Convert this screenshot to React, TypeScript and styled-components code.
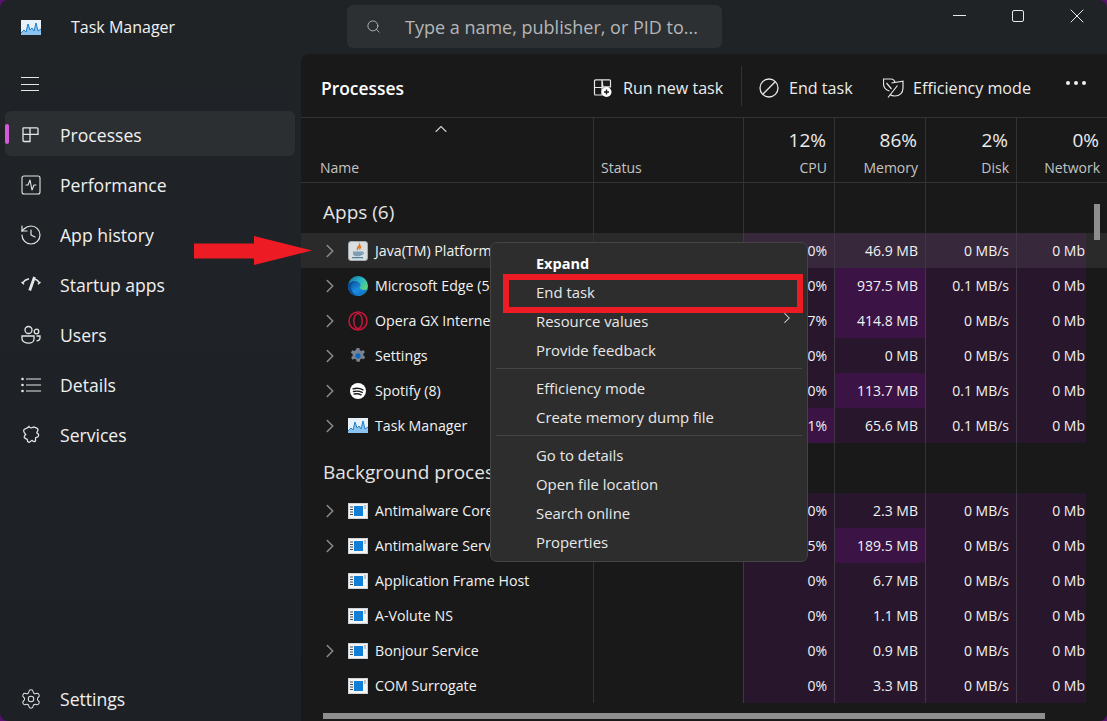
import styled, { createGlobalStyle } from "styled-components";
import { ChevronRight, ChevronUp, History, Search, Settings as SettingsIcon, SquareActivity, X } from "lucide-react";

const GlobalStyle = createGlobalStyle`
  html, body {
    margin: 0;
    height: 100%;
    background: #5a1070;
    overflow: hidden;
  }
  * {
    box-sizing: border-box;
  }
`;

const FONT = `"Open Sans", "Noto Sans", "Liberation Sans", sans-serif`;

type Proc = {
  name: string;
  icon: "java" | "edge" | "opera" | "gear" | "spotify" | "tm" | "app";
  expand?: boolean;
  cpu: string;
  mem: string;
  disk: string;
  net: string;
  memHot?: boolean;
  cpuHot?: boolean;
  hover?: boolean;
};

const apps: Proc[] = [
  { name: "Java(TM) Platform", icon: "java", expand: true, cpu: "0%", mem: "46.9 MB", disk: "0 MB/s", net: "0 Mb", hover: true },
  { name: "Microsoft Edge (5)", icon: "edge", expand: true, cpu: "0%", mem: "937.5 MB", disk: "0.1 MB/s", net: "0 Mb", memHot: true },
  { name: "Opera GX Internet", icon: "opera", expand: true, cpu: "0.7%", mem: "414.8 MB", disk: "0 MB/s", net: "0 Mb", memHot: true },
  { name: "Settings", icon: "gear", expand: true, cpu: "0%", mem: "0 MB", disk: "0 MB/s", net: "0 Mb" },
  { name: "Spotify (8)", icon: "spotify", expand: true, cpu: "0%", mem: "113.7 MB", disk: "0.1 MB/s", net: "0 Mb", memHot: true },
  { name: "Task Manager", icon: "tm", expand: true, cpu: "3.1%", mem: "65.6 MB", disk: "0.1 MB/s", net: "0 Mb", cpuHot: true },
];

const background: Proc[] = [
  { name: "Antimalware Core", icon: "app", expand: true, cpu: "0%", mem: "2.3 MB", disk: "0 MB/s", net: "0 Mb" },
  { name: "Antimalware Service", icon: "app", expand: true, cpu: "0.5%", mem: "189.5 MB", disk: "0 MB/s", net: "0 Mb", memHot: true },
  { name: "Application Frame Host", icon: "app", cpu: "0%", mem: "6.7 MB", disk: "0 MB/s", net: "0 Mb" },
  { name: "A-Volute NS", icon: "app", cpu: "0%", mem: "1.1 MB", disk: "0 MB/s", net: "0 Mb" },
  { name: "Bonjour Service", icon: "app", expand: true, cpu: "0%", mem: "0.9 MB", disk: "0 MB/s", net: "0 Mb" },
  { name: "COM Surrogate", icon: "app", cpu: "0%", mem: "3.3 MB", disk: "0 MB/s", net: "0 Mb" },
];

const TaskManagerGlyph = () => (
  <svg width="20" height="15" viewBox="0 0 20 15">
    <rect x="0" y="0" width="20" height="15" fill="#e6f1fa" />
    <path d="M0 13 L3 10 L5 12 L7 4 L9 10 L11 8 L13 11 L15 3 L17 11 L20 9 L20 15 L0 15 Z" fill="#8cc4f0" />
    <path d="M0 13 L3 10 L5 12 L7 4 L9 10 L11 8 L13 11 L15 3 L17 11 L20 9" fill="none" stroke="#1f7fd0" strokeWidth="1" />
  </svg>
);

const AppIcon = ({ kind }: { kind: Proc["icon"] }) => {
  if (kind === "java") {
    return (
      <svg width="20" height="20" viewBox="0 0 20 20">
        <rect x="0.5" y="0.5" width="19" height="19" rx="2.500" fill="#d9dee1" stroke="#a4aaae" />
        <path d="M11 1.500c2.400 3-3.800 4-1.400 8-.8-2.600 5-3.600 1.400-8z" fill="#e2630a" strokeWidth="0.4" stroke="#e2630a" />
        <path d="M13.500 4.500c-2.300 1.300-3 2.800-1.600 4.800.3-1.500 1.300-2.500 1.600-4.800z" fill="#e76f00" />
        <path d="M5 10.500h9v2.200c0 1.500-1.500 2.500-3 2.500H8c-1.500 0-3-1-3-2.500z" fill="#7f9db5" />
        <path d="M14 11c2 0 2 2.500-.5 2.500" fill="none" stroke="#5382a1" />
        <rect x="4" y="16" width="11" height="1.300" fill="#5382a1" />
      </svg>
    );
  }
  if (kind === "edge") {
    return (
      <svg width="20" height="20" viewBox="0 0 20 20">
        <defs>
          <linearGradient id="edgeBlue" x1="0.1" y1="0.2" x2="0.8" y2="1">
            <stop offset="0" stopColor="#0d5ba8" />
            <stop offset="0.5" stopColor="#1b8ee0" />
            <stop offset="1" stopColor="#0f6cbd" />
          </linearGradient>
          <linearGradient id="edgeGreen" x1="0" y1="0" x2="1" y2="0.8">
            <stop offset="0" stopColor="#0e6a9e" />
            <stop offset="0.5" stopColor="#2bb5c8" />
            <stop offset="1" stopColor="#72e25e" />
          </linearGradient>
        </defs>
        <circle cx="10" cy="10" r="10" fill="url(#edgeGreen)" />
        <path d="M10 20C4.500 20 0 15.500 0 10c0-3 3.500-4.800 7-4.800 3.200 0 5.500 1.800 5.500 4 0 1-.7 1.600-.7 2.400 0 1.500 2 2.500 4 2.500 1.500 0 2.700-.4 3.700-1C18.300 17.300 14.500 20 10 20z" fill="url(#edgeBlue)" />
        <path d="M0 10c0-3 3.500-4.800 7-4.800-3 1.500-4.500 4-4 7 .5 3.500 3.300 6.300 7 7.800C4.500 20 0 15.500 0 10z" fill="#0a4f96" />
      </svg>
    );
  }
  if (kind === "opera") {
    return (
      <svg width="20" height="20" viewBox="0 0 20 20" fill="none" stroke="#c8163c" strokeWidth="1.500">
        <circle cx="10" cy="10" r="9" />
        <ellipse cx="10" cy="10" rx="4.200" ry="7.500" />
      </svg>
    );
  }
  if (kind === "gear") {
    return (
      <svg width="20" height="20" viewBox="0 0 20 20">
        <g transform="translate(10 9.800) scale(1.150) translate(-10 -9.800)">
          <path d="M8.800 3h2.400l.4 1.900 1.400.7 1.800-.9 1.200 2-1.400 1.300.1 1.600 1.500 1.200-1.100 2.100-1.900-.7-1.300.9-.4 1.900H8.800l-.4-1.900-1.400-.8-1.800.9-1.200-2 1.400-1.300-.1-1.600-1.500-1.200 1.100-2.100 1.900.7 1.300-.9z" fill="#77838e" />
          <circle cx="10" cy="9.800" r="2.300" fill="#1565c0" />
        </g>
      </svg>
    );
  }
  if (kind === "spotify") {
    return (
      <svg width="20" height="20" viewBox="0 0 20 20" fill="none">
        <circle cx="10" cy="10" r="8" fill="#fff" />
        <path d="M5 7.800c3.200-.9 7-.6 10 1M5.500 10.500c2.800-.7 6-.4 8.700.9M6.200 13c2.300-.5 4.800-.3 6.900.8" stroke="#191919" strokeWidth="1.400" strokeLinecap="round" />
      </svg>
    );
  }
  if (kind === "tm") {
    return <TaskManagerGlyph />;
  }
  return (
    <svg width="20" height="16" viewBox="0 0 20 16">
      <rect x="0" y="0" width="20" height="16" fill="#d0d3d6" />
      <rect x="1" y="1" width="18" height="14" fill="#f4f5f6" />
      <rect x="6" y="3" width="9" height="10" fill="#0f7fd8" />
      <path d="M2 4h3M2 6.500h3M2 9h3M2 11.500h3" stroke="#40474d" strokeWidth="1" />
      <path d="M16 3h2M16 5h2" stroke="#8a9096" strokeWidth="1" />
    </svg>
  );
};

const ProcessesIcon = () => (
  <svg width="20" height="20" viewBox="0 0 20 20" fill="none" stroke="currentColor" strokeWidth="1.300">
    <path d="M2.500 2.800h6.500v6.500H2V3.300a.5.5 0 0 1 .5-.5zM9 2.800h7a1 1 0 0 1 1 1v5.500H9zM2 9.300h7v7.200H3a1 1 0 0 1-1-1z" />
  </svg>
);

const StartupIcon = () => (
  <svg width="20" height="20" viewBox="0 0 20 20" fill="none" stroke="currentColor" strokeWidth="1.400">
    <path d="M1.500 8C3 5.800 4.800 4.500 8 3.800M12.500 3.800c3 .6 4.800 1.900 6 4.200" />
    <path d="M13.500 2 8.700 15.500" strokeWidth="2.800" />
    <path d="M.5 7l2.500 2.200M19.500 7 17 9.200" />
  </svg>
);

const UsersIcon = () => (
  <svg width="20" height="20" viewBox="0 0 20 20" fill="none" stroke="currentColor" strokeWidth="1.300">
    <circle cx="7.500" cy="5" r="3.500" />
    <circle cx="15.500" cy="6.500" r="2.300" />
    <path d="M1 11h12v3c0 2.500-2.500 4.200-5.500 4.200S1 16.500 1 14z" />
    <path d="M15.500 11H19v1.800c0 1.800-1.400 3-3.500 3" />
  </svg>
);

const DetailsIcon = () => (
  <svg width="20" height="20" viewBox="0 0 20 20" fill="none" stroke="currentColor" strokeWidth="1.200">
    <path d="M5 4h15M5 10h15M5 16h15" />
    <circle cx="1.500" cy="4" r="1.300" fill="currentColor" stroke="none" />
    <circle cx="1.500" cy="10" r="1.300" fill="currentColor" stroke="none" />
    <circle cx="1.500" cy="16" r="1.300" fill="currentColor" stroke="none" />
  </svg>
);

const ServicesIcon = () => (
  <svg width="20" height="20" viewBox="0 0 20 20" fill="none" stroke="currentColor" strokeWidth="1.300">
    <path d="M8 1.500c1 1.500 3 1.500 4.500.5l1 .2c1.500.4 3.500.8 3.500 2.500 0 1.500-1.200 2-1.200 3 0 .6.700 1 1.700 1.500.3 1-.1 2.500-1 3-1.500-.2-2.200.5-2 1.500.2 1 .3 2.200-.5 2.700-1 .6-2-.3-3-1-1.200.3-1.700 1.900-3 2-1.300-.4-1.800-2-1.800-3-1.200-.5-2.500-.8-3-2.200 0-1.300 1-1.900 1.500-2.800C3.200 7.900 2.200 7 2.700 5 3.700 3.500 6.500 3.500 8 1.500z" />
  </svg>
);

const RunTaskIcon = () => (
  <svg width="20" height="20" viewBox="0 0 20 20" fill="none" stroke="currentColor" strokeWidth="1.200">
    <path d="M10 9.500H1.500V2.800a1 1 0 0 1 1-1h6.500zM9 1.800h7.500a1 1 0 0 1 1 1v6H9zM1.500 9.500h7.500V17H2.500a1 1 0 0 1-1-1z" />
    <circle cx="13.500" cy="14" r="5" fill="#fff" stroke="none" />
    <path d="M13.500 11.500v5M11 14h5" stroke="#191919" strokeWidth="1.400" />
  </svg>
);

const EndTaskIcon = () => (
  <svg width="20" height="20" viewBox="0 0 20 20" fill="none" stroke="currentColor" strokeWidth="1.300">
    <circle cx="10" cy="10" r="9" />
    <path d="M3.800 16.200 16.200 3.800" />
  </svg>
);

const LeafIcon = () => (
  <svg width="21" height="20" viewBox="0 0 21 20" fill="none" stroke="currentColor" strokeWidth="1.200">
    <path d="M6.500 13C3 12 .5 9.500.5 6V1H8c2 0 3.500 1.500 4 3.500" />
    <path d="M8.500 5 20 3.200V10c0 5-3.500 8-8 8-2 0-4-.5-5-1.500" />
    <path d="M5 19.500 14.500 7.500M3.500 5l5 6" />
  </svg>
);

const Processes = ({ rows }: { rows: Proc[] }) => (
  <>
    {rows.map((row) => (
      <Row key={row.name} $hover={row.hover}>
        <NameCell>
          <Caret>{row.expand && <ChevronRight size={22} strokeWidth={1.700} />}</Caret>
          <IconBox>
            <AppIcon kind={row.icon} />
          </IconBox>
          <NameText>{row.name}</NameText>
        </NameCell>
        <StatusCell />
        <HeatCell $hot={row.cpuHot} $hover={row.hover}>{row.cpu}</HeatCell>
        <HeatCell $hot={row.memHot} $hover={row.hover}>{row.mem}</HeatCell>
        <HeatCell $hover={row.hover}>{row.disk}</HeatCell>
        <HeatCell $hover={row.hover}>{row.net}</HeatCell>
      </Row>
    ))}
  </>
);

const Group = ({ title }: { title: string }) => (
  <GroupRow>
    <GroupTitle>{title}</GroupTitle>
    <StatusCell />
    <StatusCell />
    <StatusCell />
    <StatusCell />
    <StatusCell />
  </GroupRow>
);

const App = () => {
  return (
    <Window>
      <GlobalStyle />
      <TitleBar>
        <TitleLeft>
          <TaskManagerGlyph />
          <AppTitle>Task Manager</AppTitle>
        </TitleLeft>
        <SearchBox>
          <Search size={15} strokeWidth={1.300} />
          <SearchText>Type a name, publisher, or PID to...</SearchText>
        </SearchBox>
        <WindowControls>
          <MinimizeMark />
          <MaximizeMark />
          <X size={24} strokeWidth={1} />
        </WindowControls>
      </TitleBar>

      <Content>
        <Sidebar>
          <Hamburger>
            <span />
            <span />
            <span />
          </Hamburger>
          <NavList>
            <NavItem $active>
              <ActiveBar />
              <NavIcon><ProcessesIcon /></NavIcon>
              Processes
            </NavItem>
            <NavItem>
              <NavIcon><SquareActivity size={24} strokeWidth={1.100} /></NavIcon>
              Performance
            </NavItem>
            <NavItem>
              <NavIcon><History size={24} strokeWidth={1.200} /></NavIcon>
              App history
            </NavItem>
            <NavItem>
              <NavIcon><StartupIcon /></NavIcon>
              Startup apps
            </NavItem>
            <NavItem>
              <NavIcon><UsersIcon /></NavIcon>
              Users
            </NavItem>
            <NavItem>
              <NavIcon><DetailsIcon /></NavIcon>
              Details
            </NavItem>
            <NavItem>
              <NavIcon><ServicesIcon /></NavIcon>
              Services
            </NavItem>
          </NavList>
          <NavItem>
            <NavIcon><SettingsIcon size={22} strokeWidth={1.100} /></NavIcon>
            Settings
          </NavItem>
        </Sidebar>

        <Panel>
          <Toolbar>
            <PanelTitle>Processes</PanelTitle>
            <ToolButton $width={148} $gap={10}>
              <RunTaskIcon />
              Run new task
            </ToolButton>
            <ToolDivider />
            <ToolButton $width={124} $gap={10}>
              <EndTaskIcon />
              End task
            </ToolButton>
            <ToolButton $width={183} $gap={9}>
              <LeafIcon />
              Efficiency mode
            </ToolButton>
            <MoreDots>
              <i />
              <i />
              <i />
            </MoreDots>
          </Toolbar>

          <HeaderRow>
            <NameHead>
              <SortMark>
                <ChevronUp size={20} strokeWidth={1.400} />
              </SortMark>
              <HeadLabel>Name</HeadLabel>
            </NameHead>
            <StatusHead>
              <HeadLabel>Status</HeadLabel>
            </StatusHead>
            <MetricHead>
              <Percent>12%</Percent>
              <HeadLabel>CPU</HeadLabel>
            </MetricHead>
            <MetricHead>
              <Percent>86%</Percent>
              <HeadLabel>Memory</HeadLabel>
            </MetricHead>
            <MetricHead>
              <Percent>2%</Percent>
              <HeadLabel>Disk</HeadLabel>
            </MetricHead>
            <MetricHead>
              <Percent>0%</Percent>
              <HeadLabel>Network</HeadLabel>
            </MetricHead>
          </HeaderRow>

          <TableBody>
            <Group title="Apps (6)" />
            <Processes rows={apps} />
            <Group title="Background processes" />
            <Processes rows={background} />
          </TableBody>

          <VerticalThumb />
          <HorizontalThumb />
        </Panel>
      </Content>

      <ContextMenu>
        <MenuItem $bold>Expand</MenuItem>
        <MenuItem>End task</MenuItem>
        <MenuItem>
          Resource values
          <MenuArrow>
            <ChevronRight size={18} strokeWidth={1.400} />
          </MenuArrow>
        </MenuItem>
        <MenuItem>Provide feedback</MenuItem>
        <MenuSeparator />
        <MenuItem>Efficiency mode</MenuItem>
        <MenuItem>Create memory dump file</MenuItem>
        <MenuSeparator />
        <MenuItem>Go to details</MenuItem>
        <MenuItem>Open file location</MenuItem>
        <MenuItem>Search online</MenuItem>
        <MenuItem>Properties</MenuItem>
      </ContextMenu>

      <Highlight />
      <Arrow width="118" height="30" viewBox="0 0 118 30">
        <path d="M0 7.500H60V0L118 14.500 60 29V22.500H0Z" fill="#ed1c24" />
      </Arrow>
    </Window>
  );
};

export default App;

const Window = styled.div`
  position: relative;
  width: 1107px;
  height: 721px;
  display: flex;
  flex-direction: column;
  overflow: hidden;
  border-radius: 8px;
  background: linear-gradient(180deg, #202326, #1d2126);
  color: #fff;
  font-family: ${FONT};
`;

const TitleBar = styled.header`
  height: 54px;
  flex: none;
  display: flex;
  align-items: flex-start;
`;

const TitleLeft = styled.div`
  width: 347px;
  height: 54px;
  padding-left: 21px;
  display: flex;
  align-items: center;
  gap: 30px;
`;

const AppTitle = styled.span`
  font-size: 16px;
  color: #f2f2f2;
`;

const SearchBox = styled.div`
  width: 375px;
  height: 43px;
  margin-top: 5px;
  padding-left: 19px;
  display: flex;
  align-items: center;
  gap: 24px;
  border-radius: 6px;
  background: #2c3033;
  color: #c8c8c8;
`;

const SearchText = styled.span`
  font-size: 18px;
  color: #b4b6b7;
`;

const WindowControls = styled.div`
  margin-left: auto;
  width: 154px;
  height: 32px;
  display: flex;
  align-items: center;
  color: #e8e8e8;

  svg {
    margin-left: 41px;
  }
`;

const MinimizeMark = styled.span`
  width: 13px;
  height: 1px;
  margin-bottom: 2px;
  background: #e8e8e8;
`;

const MaximizeMark = styled.span`
  width: 12px;
  height: 12px;
  margin-left: 46px;
  border: 1px solid #e8e8e8;
  border-radius: 2px;
`;

const Content = styled.div`
  flex: 1;
  min-height: 0;
  display: flex;
`;

const Sidebar = styled.nav`
  width: 301px;
  flex: none;
  padding: 0 6px 1px 5px;
  display: flex;
  flex-direction: column;
`;

const Hamburger = styled.div`
  height: 57px;
  padding: 23px 0 0 16px;
  display: flex;
  flex-direction: column;
  gap: 5.500px;

  span {
    width: 18px;
    height: 1px;
    background: #e6e6e6;
  }
`;

const NavList = styled.div`
  flex: 1;
  display: flex;
  flex-direction: column;
  gap: 5px;
`;

const NavItem = styled.div<{ $active?: boolean }>`
  position: relative;
  height: 45px;
  flex: none;
  padding: 2px 0 0 16px;
  display: flex;
  align-items: center;
  gap: 19px;
  border-radius: 6px;
  font-size: 17.600px;
  color: #f0f0f0;
  background: ${({ $active }) => ($active ? "#2c2f32" : "transparent")};
`;

const NavIcon = styled.span`
  width: 20px;
  height: 20px;
  flex: none;
  display: flex;
  align-items: center;
  justify-content: center;
  color: #e6e6e6;

  svg {
    flex: none;
  }
`;

const ActiveBar = styled.span`
  position: absolute;
  left: 0;
  top: 13px;
  width: 4px;
  height: 20px;
  border-radius: 2px;
  background: #d35ad8;
`;

const Panel = styled.main`
  position: relative;
  flex: 1;
  min-width: 0;
  display: flex;
  flex-direction: column;
  overflow: hidden;
  border-top-left-radius: 8px;
  background: #191919;
`;

const Toolbar = styled.div`
  height: 64px;
  flex: none;
  padding: 4px 0 0 20px;
  display: flex;
  align-items: center;
  border-bottom: 1px solid #333;
`;

const PanelTitle = styled.h1`
  margin: 0 auto 0 0;
  font-size: 17.400px;
  font-weight: 600;
  color: #fff;
`;

const ToolButton = styled.div<{ $width: number; $gap: number }>`
  width: ${({ $width }) => $width}px;
  display: flex;
  align-items: center;
  gap: ${({ $gap }) => $gap}px;
  font-size: 16.100px;
  color: #ececec;

  svg {
    flex: none;
    color: #e6e6e6;
  }
`;

const ToolDivider = styled.span`
  width: 1px;
  height: 40px;
  margin: -4px 17px 0 0;
  background: #333;
`;

const MoreDots = styled.div`
  width: 41px;
  padding-bottom: 10px;
  display: flex;
  gap: 4px;

  i {
    width: 4px;
    height: 4px;
    border-radius: 50%;
    background: #f0f0f0;
  }
`;

const COLUMNS = "292px 150px 91px 91px 91px 91px";

const HeaderRow = styled.div`
  height: 65px;
  flex: none;
  display: grid;
  grid-template-columns: ${COLUMNS};
  border-bottom: 1px solid #333;
`;

const NameHead = styled.div`
  position: relative;
  padding: 0 0 4px 19px;
  display: flex;
  align-items: flex-end;
`;

const SortMark = styled.span`
  position: absolute;
  left: 130px;
  top: 1px;
  display: flex;
  color: #c8c8c8;
`;

const StatusHead = styled.div`
  padding: 0 0 4px 7px;
  display: flex;
  align-items: flex-end;
  border-left: 1px solid #333;
`;

const MetricHead = styled.div`
  padding: 10px 7px 4px 0;
  display: flex;
  flex-direction: column;
  align-items: flex-end;
  justify-content: space-between;
  border-left: 1px solid #333;
`;

const HeadLabel = styled.span`
  font-size: 14px;
  line-height: 20px;
  color: #c4c4c4;
`;

const Percent = styled.span`
  margin-right: 1px;
  font-size: 19px;
  line-height: 24px;
  color: #ececec;
`;

const TableBody = styled.div`
  flex: 1;
  min-height: 0;
  max-height: 522px;
  overflow: hidden;
`;

const GroupRow = styled.div`
  height: 50px;
  display: grid;
  grid-template-columns: ${COLUMNS};
`;

const GroupTitle = styled.div`
  padding: 16px 0 0 22px;
  font-size: 19px;
  line-height: 26px;
  color: #e4e4e4;
  white-space: nowrap;
`;

const Row = styled.div<{ $hover?: boolean }>`
  height: 35px;
  display: grid;
  grid-template-columns: 292px 150px 91px 91px 91px 70px;
  background: ${({ $hover }) => ($hover ? "#2a2a2a" : "transparent")};
`;

const NameCell = styled.div`
  padding-left: 18px;
  display: flex;
  align-items: center;
  overflow: hidden;
`;

const Caret = styled.span`
  width: 29px;
  flex: none;
  display: flex;
  color: #8a8a8a;
`;

const IconBox = styled.span`
  width: 27px;
  flex: none;
  display: flex;
  align-items: center;
`;

const NameText = styled.span`
  font-size: 14.200px;
  color: #f2f2f2;
  white-space: nowrap;
`;

const StatusCell = styled.div`
  border-left: 1px solid #333;
`;

const HeatCell = styled.div<{ $hot?: boolean; $hover?: boolean }>`
  padding-right: 7px;
  display: flex;
  align-items: center;
  justify-content: flex-end;
  border-left: 1px solid #3f3843;
  font-size: 14px;
  color: #f2f2f2;
  white-space: nowrap;
  background: ${({ $hot, $hover }) => ($hover ? "#38283c" : $hot ? "#3b1344" : "#28172c")};

  &:last-child {
    padding-right: 1px;
  }
`;

const VerticalThumb = styled.span`
  position: absolute;
  left: 793px;
  top: 150px;
  width: 6px;
  height: 36px;
  background: #8e8e8e;
`;

const HorizontalThumb = styled.span`
  position: absolute;
  left: 22px;
  top: 659px;
  width: 722px;
  height: 6px;
  background: #8e8e8e;
`;

const ContextMenu = styled.div`
  position: absolute;
  left: 490px;
  top: 242px;
  width: 318px;
  height: 320px;
  padding: 5px;
  border: 1px solid #444;
  border-radius: 7px;
  background: #2d2d2d;
`;

const MenuItem = styled.div<{ $bold?: boolean }>`
  position: relative;
  height: 29px;
  padding: ${({ $bold }) => ($bold ? "2px" : "0")} 0 0 40px;
  display: flex;
  align-items: center;
  font-size: ${({ $bold }) => ($bold ? 14.500 : 14.900)}px;
  font-weight: ${({ $bold }) => ($bold ? 700 : 400)};
  color: ${({ $bold }) => ($bold ? "#fff" : "#e8e8e8")};
`;

const MenuArrow = styled.span`
  position: absolute;
  right: 6px;
  top: 3px;
  display: flex;
  color: #e0e0e0;
`;

const MenuSeparator = styled.hr`
  height: 1px;
  margin: 4px 0;
  border: 0;
  background: #454545;
`;

const Highlight = styled.div`
  position: absolute;
  left: 503px;
  top: 274px;
  width: 300px;
  height: 39px;
  border: 6px solid #ed1c24;
`;

const Arrow = styled.svg`
  position: absolute;
  left: 194px;
  top: 235.500px;
`;
